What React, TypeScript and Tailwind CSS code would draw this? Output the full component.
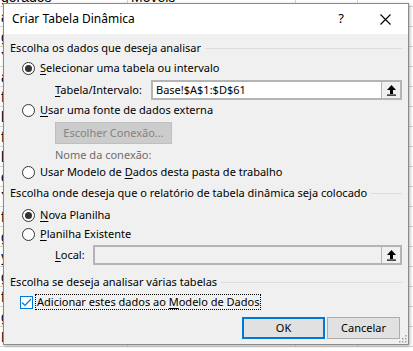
import React from "react";

const font = { fontFamily: '"Noto Sans", "Open Sans", sans-serif' };

function U({ c }: { c: string }) {
  return <span className="underline underline-offset-2">{c}</span>;
}

function Radio({ checked }: { checked?: boolean }) {
  return (
    <span className="w-[13px] h-[13px] rounded-full border border-[#333333] bg-white flex items-center justify-center shrink-0">
      {checked && <span className="w-[7px] h-[7px] rounded-full bg-[#333333]" />}
    </span>
  );
}

function Header({ text }: { text: string }) {
  return (
    <div className="flex items-center h-[14px] pr-[6px]">
      <span className="whitespace-nowrap">{text}</span>
      <span className="flex-1 h-px bg-[#dcdcdc] ml-[4px]" />
    </div>
  );
}

function UpArrow() {
  return (
    <svg width="11" height="12" viewBox="0 0 11 12">
      <path d="M5.5 1 L10 6 L7 6 L7 10 L4 10 L4 6 L1 6 Z" fill="#000" />
      <rect x="1" y="10.5" width="9" height="1.2" fill="#000" />
    </svg>
  );
}

const left = ["g", "a", "g", "Y", "a", "f", "h", "f", "h", "e", "Y", "f", "g", "y", "g", "f", "g", "E"];

export default function App() {
  return (
    <div className="relative w-[413px] h-[351px] overflow-hidden bg-white text-[11px] text-black" style={font}>
      {/* spreadsheet behind */}
      <div className="flex flex-col mt-[-13px]" style={{ fontFamily: '"Liberation Sans", sans-serif' }}>
        {left.map((l, i) => {
          const edge = i === 0 || i === left.length - 1;
          return (
            <div key={i} className="flex h-[20px] border-b border-[#d4d4d4] text-[14px] leading-[20px]">
              <div className="w-[128px] pl-[1px] border-r border-[#d4d4d4] overflow-hidden whitespace-nowrap">
                {edge ? (i === 0 ? "gorados" : "Emoradas") : <span className="inline-block w-[3px] overflow-hidden align-top">{l}</span>}
              </div>
              <div className="w-[168px] pl-[3px] border-r border-[#d4d4d4] overflow-hidden whitespace-nowrap">{edge ? "Moveis" : ""}</div>
              <div className="w-[62px] border-r border-[#d4d4d4]" />
              <div className="flex-1" />
            </div>
          );
        })}
      </div>

      {/* dialog window */}
      <div className="absolute left-[3px] top-[3px] w-[406px] h-[342px] border border-[#8c8c8c] bg-[#f0f0f0] shadow-[1px_1px_3px_rgba(0,0,0,0.3)] flex flex-col">
        {/* title bar */}
        <div className="h-[30px] bg-white flex items-center shrink-0">
          <span className="ml-[8px] text-[12px]">Criar Tabela Dinâmica</span>
          <span className="ml-auto w-[30px] text-center text-[13px] mr-[6px]">?</span>
          <span className="w-[46px] flex items-center justify-center">
            <svg width="11" height="11" viewBox="0 0 11 11">
              <path d="M0.5 0.5 L10.5 10.5 M10.5 0.5 L0.5 10.5" stroke="#000" strokeWidth="1.1" />
            </svg>
          </span>
        </div>

        {/* body */}
        <div className="flex flex-col pl-[6px] relative flex-1">
          <div className="mt-[7px]">
            <Header text="Escolha os dados que deseja analisar" />
          </div>

          <div className="mt-[3px] h-[20px] flex items-center pl-[12px] gap-[5px]">
            <Radio checked />
            <span><U c="S" />elecionar uma tabela ou intervalo</span>
          </div>

          <div className="mt-[2px] h-[20px] flex items-center pl-[45px] pr-[6px]">
            <span className="w-[96px]"><U c="T" />abela/Intervalo:</span>
            <div className="flex-1 h-[20px] border-2 border-[#b4b4b4] bg-white flex items-center">
              <span className="pl-[3px] flex-1">Base!$A$1:$D$61</span>
              <span className="w-[19px] h-[16px] bg-[#f0f0f0] border-l border-[#b4b4b4] flex items-center justify-center">
                <UpArrow />
              </span>
            </div>
          </div>

          <div className="h-[20px] flex items-center pl-[12px] gap-[5px]">
            <Radio />
            <span><U c="U" />sar uma fonte de dados externa</span>
          </div>

          <div className="mt-[2px] pl-[45px]">
            <div className="w-[117px] h-[22px] border border-[#bfbfbf] bg-[#cccccc] text-[#838383] flex items-center justify-center">
              Escolher Conexão...
            </div>
          </div>

          <div className="mt-[3px] h-[16px] flex items-center pl-[45px] text-[#6d6d6d]">
            Nome da conexão:
          </div>

          <div className="mt-[1px] h-[16px] flex items-center pl-[12px] gap-[5px]">
            <Radio />
            <span>Usar Modelo de <U c="D" />ados desta pasta de trabalho</span>
          </div>

          <div className="mt-[6px]">
            <Header text="Escolha onde deseja que o relatório de tabela dinâmica seja colocado" />
          </div>

          <div className="mt-[7px] h-[16px] flex items-center pl-[12px] gap-[5px]">
            <Radio checked />
            <span><U c="N" />ova Planilha</span>
          </div>

          <div className="mt-[3px] h-[16px] flex items-center pl-[12px] gap-[5px]">
            <Radio />
            <span><U c="P" />lanilha Existente</span>
          </div>

          <div className="mt-[3px] h-[20px] flex items-center pl-[45px] pr-[6px]">
            <span className="w-[38px]"><U c="L" />ocal:</span>
            <div className="flex-1 h-[20px] border-2 border-[#b4b4b4] bg-[#f0f0f0] flex items-center justify-end">
              <span className="w-[19px] h-[16px] bg-[#f0f0f0] border-l border-[#b4b4b4] flex items-center justify-center">
                <UpArrow />
              </span>
            </div>
          </div>

          <div className="mt-[10px]">
            <Header text="Escolha se deseja analisar várias tabelas" />
          </div>

          <div className="mt-[5px] h-[16px] flex items-center pl-[10px]">
            <span className="w-[13px] h-[13px] border border-[#0078d7] bg-white flex items-center justify-center shrink-0">
              <svg width="11" height="9" viewBox="0 0 11 9">
                <path d="M1 4.5 L4 7.5 L10 1" stroke="#0078d7" strokeWidth="1.2" fill="none" />
              </svg>
            </span>
            <span className="ml-[2px] px-[1px] border border-dotted border-black leading-[14px]">
              Adicionar estes dados ao <U c="M" />odelo de Dados
            </span>
          </div>

          <div className="mt-[7px] flex justify-end gap-[2px] pr-[8px]">
            <div className="w-[83px] h-[22px] border-2 border-[#0078d7] bg-[#e1e1e1] flex items-center justify-center">OK</div>
            <div className="w-[73px] h-[22px] border border-[#adadad] bg-[#e1e1e1] flex items-center justify-center">Cancelar</div>
          </div>

          <svg className="absolute right-[1px] bottom-[1px]" width="8" height="8" viewBox="0 0 8 8">
            <rect x="6" y="0" width="1.5" height="1.5" fill="#a0a0a0" />
            <rect x="3" y="3" width="1.5" height="1.5" fill="#a0a0a0" />
            <rect x="6" y="3" width="1.5" height="1.5" fill="#a0a0a0" />
            <rect x="0" y="6" width="1.5" height="1.5" fill="#a0a0a0" />
            <rect x="3" y="6" width="1.5" height="1.5" fill="#a0a0a0" />
            <rect x="6" y="6" width="1.5" height="1.5" fill="#a0a0a0" />
          </svg>
        </div>
      </div>
    </div>
  );
}
